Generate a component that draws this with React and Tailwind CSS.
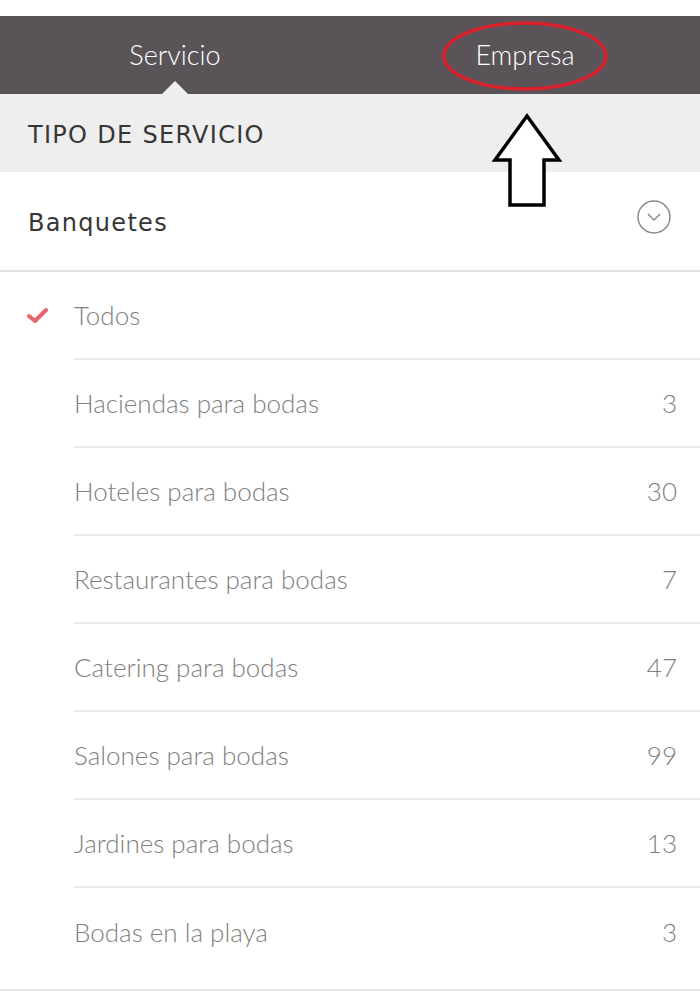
import React from 'react';

const rows = [
  { label: 'Haciendas para bodas', count: 3 },
  { label: 'Hoteles para bodas', count: 30 },
  { label: 'Restaurantes para bodas', count: 7 },
  { label: 'Catering para bodas', count: 47 },
  { label: 'Salones para bodas', count: 99 },
  { label: 'Jardines para bodas', count: 13 },
  { label: 'Bodas en la playa', count: 3 },
];

function Row({ label, count, checked, last }) {
  return (
    <div className="flex h-[88px]">
      <div className="w-[74px] flex items-center pl-[27px]">
        {checked && (
          <svg width="22" height="18" viewBox="0 0 22 18">
            <path d="M2 9 L8 14 L19 3" fill="none" stroke="#e8646a" strokeWidth="4" strokeLinecap="round" strokeLinejoin="round" />
          </svg>
        )}
      </div>
      <div className={`flex-1 flex items-center justify-between pr-[23px] ${last ? '' : 'border-b-2 border-[#ececec]'}`}>
        <span className="text-[26px] font-light text-[#808080]">{label}</span>
        {count !== undefined && <span className="text-[26px] font-light text-[#808080]">{count}</span>}
      </div>
    </div>
  );
}

export default function App() {
  return (
    <div className="relative w-[700px] h-[996px] bg-white overflow-hidden" style={{ fontFamily: 'Lato, "Noto Sans", sans-serif' }}>
      <div className="h-4 bg-white" />
      <div className="flex h-[78px] bg-[#5a5459]">
        <div className="relative w-1/2 flex items-center justify-center">
          <span className="text-white text-[27px] font-light">Servicio</span>
          <div className="absolute bottom-0 left-[162px] w-0 h-0 border-l-[13px] border-r-[13px] border-b-[13px] border-l-transparent border-r-transparent border-b-[#eeeeee]" />
        </div>
        <div className="w-1/2 flex items-center justify-center">
          <span className="text-white text-[27px] font-light">Empresa</span>
        </div>
      </div>
      <div className="h-[78px] bg-[#eeeeee] flex items-center px-7 pt-[4px]">
        <span className="text-[24px] tracking-[1.3px] text-[#363636]" style={{ fontFamily: '"DejaVu Sans", sans-serif' }}>TIPO DE SERVICIO</span>
      </div>
      <div className="h-[100px] flex items-center justify-between pl-7 pr-[28px] border-b-2 border-[#e2e2e2]">
        <span className="text-[24px] tracking-[1.3px] text-[#363636] pt-[4px]" style={{ fontFamily: '"DejaVu Sans", sans-serif' }}>Banquetes</span>
        <svg className="mb-[8px]" width="36" height="36" viewBox="0 0 36 36">
          <circle cx="18" cy="18" r="16" fill="none" stroke="#8a8a8a" strokeWidth="1.5" />
          <path d="M12 15 L18 21 L24 15" fill="none" stroke="#8a8a8a" strokeWidth="1.5" />
        </svg>
      </div>
      <Row label="Todos" checked />
      {rows.map((r, i) => (
        <Row key={r.label} label={r.label} count={r.count} last={i === rows.length - 1} />
      ))}
      <div className="h-[15px] border-b-2 border-[#e6e6e6]" />

      <svg className="absolute left-0 top-0 pointer-events-none" width="700" height="996">
        <ellipse cx="525" cy="56" rx="81" ry="33" fill="none" stroke="#d9202c" strokeWidth="3.5" />
        <path d="M527 116 L559 160 L544 160 L544 205 L510 205 L510 160 L495 160 Z" fill="white" stroke="black" strokeWidth="3.5" strokeLinejoin="miter" />
      </svg>
    </div>
  );
}
